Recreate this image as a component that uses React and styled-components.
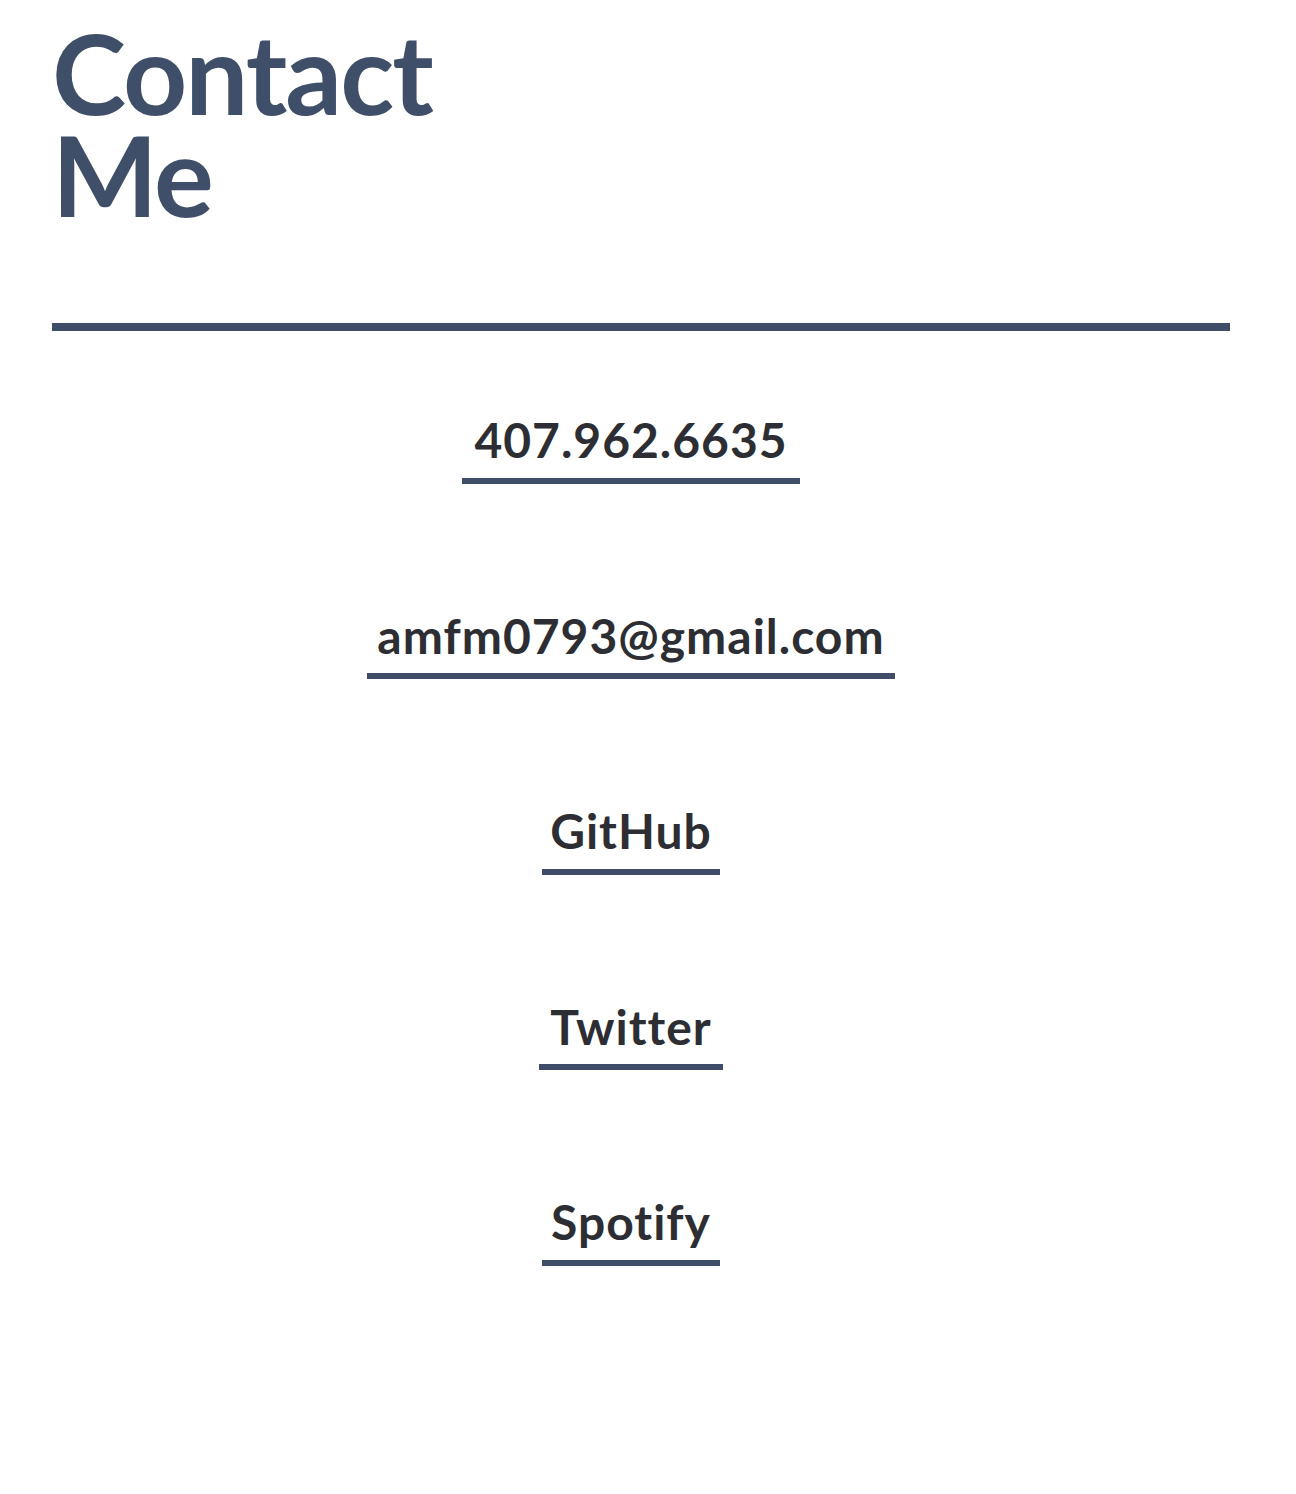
import React from "react";
import styled, { createGlobalStyle } from "styled-components";

const Global = createGlobalStyle`
  body {
    margin: 0;
    background: #ffffff;
    font-family: Lato, "Open Sans", sans-serif;
  }
`

const Page = styled.main`
  padding: 21px 66px 120px 52px;
`

const Title = styled.h1`
  margin: 0;
  width: 400px;
  font-size: 112px;
  line-height: 102px;
  font-weight: 700;
  letter-spacing: -2px;
  color: #404f69;
`

const Rule = styled.hr`
  margin: 98px 0 0 0;
  border: none;
  height: 8px;
  background-color: #3f4d68;
`

const Links = styled.ul`
  list-style: none;
  margin: 80px 20px 0 0;
  padding: 0;
  display: flex;
  flex-direction: column;
  align-items: center;
  gap: 123px;
`

const Item = styled.li`
  display: block;
`

const Link = styled.a`
  display: inline-block;
  padding: 0 ${(p) => p.pad || 12}px 9px;
  font-size: 48px;
  line-height: 1.2;
  font-weight: 700;
  letter-spacing: 1px;
  font-variant-ligatures: none;
  color: #2d2e33;
  text-decoration: none;
  border-bottom: 6px solid #3f4d68;
`

function App() {
  return (
    <>
      <Global />
      <Page>
        <Title>Contact Me</Title>
        <Rule />
        <Links>
          <Item><Link href="#">407.962.6635</Link></Item>
          <Item><Link href="#" pad={10}>amfm0793@gmail.com</Link></Item>
          <Item><Link href="#" pad={8}>GitHub</Link></Item>
          <Item><Link href="#" pad={11}>Twitter</Link></Item>
          <Item><Link href="#" pad={9}>Spotify</Link></Item>
        </Links>
      </Page>
    </>
  )
}

export default App
